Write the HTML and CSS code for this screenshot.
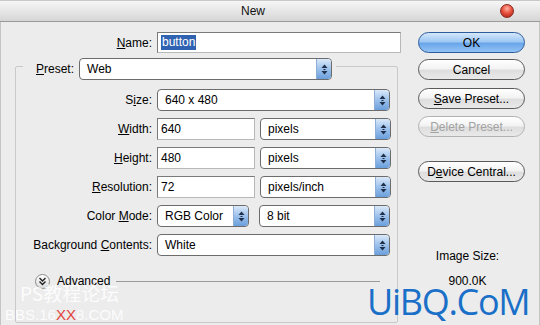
FILE: index.html
```html
<!DOCTYPE html>
<html>
<head>
<meta charset="utf-8">
<link rel="stylesheet" href="styles.css">
</head>
<body>
<div class="dialog">
  <div class="titlebar">
    <span class="title">New</span>
    <span class="spacer"></span>
    <span class="close"></span>
  </div>
  <div class="main">
    <div class="form">
      <div class="row name-row">
        <label class="lbl"><u>N</u>ame:</label>
        <div class="input wide"><span class="sel">button</span></div>
      </div>
      <fieldset class="group">
        <legend class="legend">
          <label class="lbl-preset"><u>P</u>reset:</label>
          <div class="select preset"><span class="val">Web</span><span class="arrow"><svg width="7" height="11" viewBox="0 0 7 11"><path d="M3.5 0.5 L6.5 4 L0.5 4 Z" fill="#1f2f4a"/><path d="M3.5 10.5 L6.5 7 L0.5 7 Z" fill="#1f2f4a"/><rect x="2.5" y="5" width="2" height="1" fill="#1f2f4a"/></svg></span></div>
        </legend>
        <div class="rows">
          <div class="row">
            <label class="lbl">S<u>i</u>ze:</label>
            <div class="select full"><span class="val">640 x 480</span><span class="arrow"><svg width="7" height="11" viewBox="0 0 7 11"><path d="M3.5 0.5 L6.5 4 L0.5 4 Z" fill="#1f2f4a"/><path d="M3.5 10.5 L6.5 7 L0.5 7 Z" fill="#1f2f4a"/><rect x="2.5" y="5" width="2" height="1" fill="#1f2f4a"/></svg></span></div>
          </div>
          <div class="row">
            <label class="lbl"><u>W</u>idth:</label>
            <div class="input num">640</div>
            <div class="select unit"><span class="val">pixels</span><span class="arrow"><svg width="7" height="11" viewBox="0 0 7 11"><path d="M3.5 0.5 L6.5 4 L0.5 4 Z" fill="#1f2f4a"/><path d="M3.5 10.5 L6.5 7 L0.5 7 Z" fill="#1f2f4a"/><rect x="2.5" y="5" width="2" height="1" fill="#1f2f4a"/></svg></span></div>
          </div>
          <div class="row">
            <label class="lbl"><u>H</u>eight:</label>
            <div class="input num">480</div>
            <div class="select unit"><span class="val">pixels</span><span class="arrow"><svg width="7" height="11" viewBox="0 0 7 11"><path d="M3.5 0.5 L6.5 4 L0.5 4 Z" fill="#1f2f4a"/><path d="M3.5 10.5 L6.5 7 L0.5 7 Z" fill="#1f2f4a"/><rect x="2.5" y="5" width="2" height="1" fill="#1f2f4a"/></svg></span></div>
          </div>
          <div class="row">
            <label class="lbl"><u>R</u>esolution:</label>
            <div class="input num">72</div>
            <div class="select unit"><span class="val">pixels/inch</span><span class="arrow"><svg width="7" height="11" viewBox="0 0 7 11"><path d="M3.5 0.5 L6.5 4 L0.5 4 Z" fill="#1f2f4a"/><path d="M3.5 10.5 L6.5 7 L0.5 7 Z" fill="#1f2f4a"/><rect x="2.5" y="5" width="2" height="1" fill="#1f2f4a"/></svg></span></div>
          </div>
          <div class="row">
            <label class="lbl">Color <u>M</u>ode:</label>
            <div class="select mode"><span class="val">RGB Color</span><span class="arrow"><svg width="7" height="11" viewBox="0 0 7 11"><path d="M3.5 0.5 L6.5 4 L0.5 4 Z" fill="#1f2f4a"/><path d="M3.5 10.5 L6.5 7 L0.5 7 Z" fill="#1f2f4a"/><rect x="2.5" y="5" width="2" height="1" fill="#1f2f4a"/></svg></span></div>
            <div class="select unit bits"><span class="val">8 bit</span><span class="arrow"><svg width="7" height="11" viewBox="0 0 7 11"><path d="M3.5 0.5 L6.5 4 L0.5 4 Z" fill="#1f2f4a"/><path d="M3.5 10.5 L6.5 7 L0.5 7 Z" fill="#1f2f4a"/><rect x="2.5" y="5" width="2" height="1" fill="#1f2f4a"/></svg></span></div>
          </div>
          <div class="row">
            <label class="lbl">Background <u>C</u>ontents:</label>
            <div class="select full"><span class="val">White</span><span class="arrow"><svg width="7" height="11" viewBox="0 0 7 11"><path d="M3.5 0.5 L6.5 4 L0.5 4 Z" fill="#1f2f4a"/><path d="M3.5 10.5 L6.5 7 L0.5 7 Z" fill="#1f2f4a"/><rect x="2.5" y="5" width="2" height="1" fill="#1f2f4a"/></svg></span></div>
          </div>
        </div>
        <div class="advanced">
          <span class="adv-btn"><svg width="9" height="9" viewBox="0 0 9 9"><path d="M1.5 1 L4.5 4 L7.5 1 M1.5 4.5 L4.5 7.5 L7.5 4.5" fill="none" stroke="#222" stroke-width="1.4"/></svg></span>
          <span class="adv-text">Advanced</span>
          <span class="adv-line"></span>
        </div>
      </fieldset>
    </div>
    <div class="side">
      <div class="btn ok">OK</div>
      <div class="btn cancel">Cancel</div>
      <div class="btn save"><u>S</u>ave Preset...</div>
      <div class="btn del disabled"><u>D</u>elete Preset...</div>
      <div class="btn device">D<u>e</u>vice Central...</div>
      <div class="imgsize">Image Size:</div>
      <div class="imgval">900.0K</div>
    </div>
  </div>
  <div class="wm-cn">PS教程论坛</div>
  <div class="wm-bbs">BBS.16<span class="red">XX</span>8.COM</div>
  <div class="wm-uibq">UiBQ.CoM</div>
</div>
</body>
</html>
```

FILE: styles.css
```css
* { box-sizing: border-box; }
html, body { margin: 0; padding: 0; }
body {
  font-family: "Liberation Sans", Arial, sans-serif;
  font-size: 12px;
  color: #000;
  background: #ececec;
}
.dialog {
  position: relative;
  width: 540px;
  height: 325px;
  overflow: hidden;
  background: #ececec;
  box-shadow: inset 1px 0 0 #c4c4c4, inset -1px 0 0 #c4c4c4;
}
.titlebar {
  height: 22px;
  display: flex;
  align-items: center;
  background: linear-gradient(#f6f6f6, #e6e6e6 50%, #d6d6d6);
  border-bottom: 1px solid #9a9a9a;
  border-top: 1px solid #c8c8c8;
}
.title {
  margin-left: 241px;
  font-size: 12px;
  color: #111;
}
.spacer { flex: 1; }
.close {
  width: 14px;
  height: 14px;
  border-radius: 50%;
  margin-right: 26px;
  background: radial-gradient(circle at 50% 30%, #ffb3a6 0, #e8533f 45%, #a8170c 100%);
  border: 1px solid #8a2a20;
}
.main {
  display: flex;
}
.form {
  width: 410px;
  padding-top: 10px;
}
.row {
  display: flex;
  align-items: center;
  height: 22px;
}
.name-row { height: 21px; }
.name-row .lbl { width: 152px; }
.lbl {
  width: 136px;
  text-align: right;
  margin-right: 5px;
  white-space: nowrap;
}
.input {
  height: 22px;
  background: #fff;
  border: 1px solid #7a7a7a;
  border-right-color: #b8b8b8;
  border-bottom-color: #b8b8b8;
  padding: 0 3px;
  display: flex;
  align-items: center;
}
.name-row .input { height: 21px; }
.wide { width: 244px; }
.sel {
  background: #2f62b0;
  color: #fff;
  padding: 0 1px;
  line-height: 15px;
}
.num { width: 98px; margin-right: 5px; }
.select {
  height: 22px;
  background: #fff;
  border: 1px solid #6c6c6c;
  border-radius: 4px;
  display: flex;
  align-items: center;
  overflow: hidden;
}
.select .val {
  flex: 1;
  padding-left: 7px;
  white-space: nowrap;
}
.select .arrow {
  width: 15px;
  height: 20px;
  display: flex;
  align-items: center;
  justify-content: center;
  background: linear-gradient(#dbe9f9, #9cc1ec 50%, #6a9fdc);
  border-left: 1px solid #8eaed6;
  border-radius: 0 3px 3px 0;
}
.full { width: 233px; }
.unit { width: 131px; }
.mode { width: 92px; margin-right: 10px; }
.preset { width: 253px; }
.group {
  margin: 0 0 0 15px;
  width: 383px;
  height: 270px;
  padding: 0;
  border: 1px solid #c9c9c9;
  border-radius: 2px;
}
.legend {
  margin-left: 7px;
  padding: 5px 4px 0 13px;
  display: flex;
  align-items: center;
}
.lbl-preset { margin-right: 5px; }
.rows {
  margin-top: 9px;
  display: flex;
  flex-direction: column;
  gap: 7px;
}
.advanced {
  display: flex;
  align-items: center;
  margin-top: 17px;
  margin-left: 19px;
  height: 16px;
}
.adv-btn {
  width: 15px;
  height: 15px;
  border-radius: 50%;
  border: 1px solid #8c8c8c;
  background: linear-gradient(#ffffff, #dcdcdc);
  display: flex;
  align-items: center;
  justify-content: center;
}
.adv-text { margin-left: 7px; }
.adv-line {
  width: 264px;
  margin-left: 6px;
  border-top: 1px solid #9a9a9a;
}
.side {
  margin-left: 8px;
  padding-top: 10px;
  width: 107px;
  display: flex;
  flex-direction: column;
  align-items: center;
}
.btn {
  width: 107px;
  height: 21px;
  border-radius: 11px;
  border: 1px solid #5a5a5a;
  background: linear-gradient(#ffffff, #f3f3f3 45%, #dedede 55%, #e9e9e9);
  display: flex;
  align-items: center;
  justify-content: center;
  white-space: nowrap;
}
.ok {
  border-color: #2d5c9c;
  background: linear-gradient(#d4e7fb, #9fc8f3 45%, #6aa6ea 55%, #93c3f5);
}
.cancel { margin-top: 6px; }
.save { margin-top: 8px; }
.del { margin-top: 7px; }
.disabled { color: #a2a2a2; border-color: #b2b2b2; }
.device { margin-top: 24px; }
.imgsize { margin-top: 67px; margin-left: -8px; }
.imgval { margin-top: 11px; margin-left: -8px; }
.wm-cn {
  position: absolute;
  left: 20px;
  top: 282px;
  font-size: 19px;
  color: rgba(255,255,255,0.85);
  font-family: "Noto Sans CJK SC", sans-serif;
  line-height: 22px;
}
.wm-bbs {
  position: absolute;
  left: 5px;
  top: 306px;
  font-size: 15px;
  line-height: 17px;
  color: rgba(255,255,255,0.85);
  font-family: "Liberation Sans", sans-serif;
  transform-origin: left top;
}
.wm-bbs .red { color: #e2453e; }
.wm-uibq {
  position: absolute;
  left: 367px;
  top: 282px;
  font-family: "Open Sans", sans-serif;
  font-size: 36px;
  line-height: 40px;
  letter-spacing: -1.3px;
  color: #1a70c8;
}
```
